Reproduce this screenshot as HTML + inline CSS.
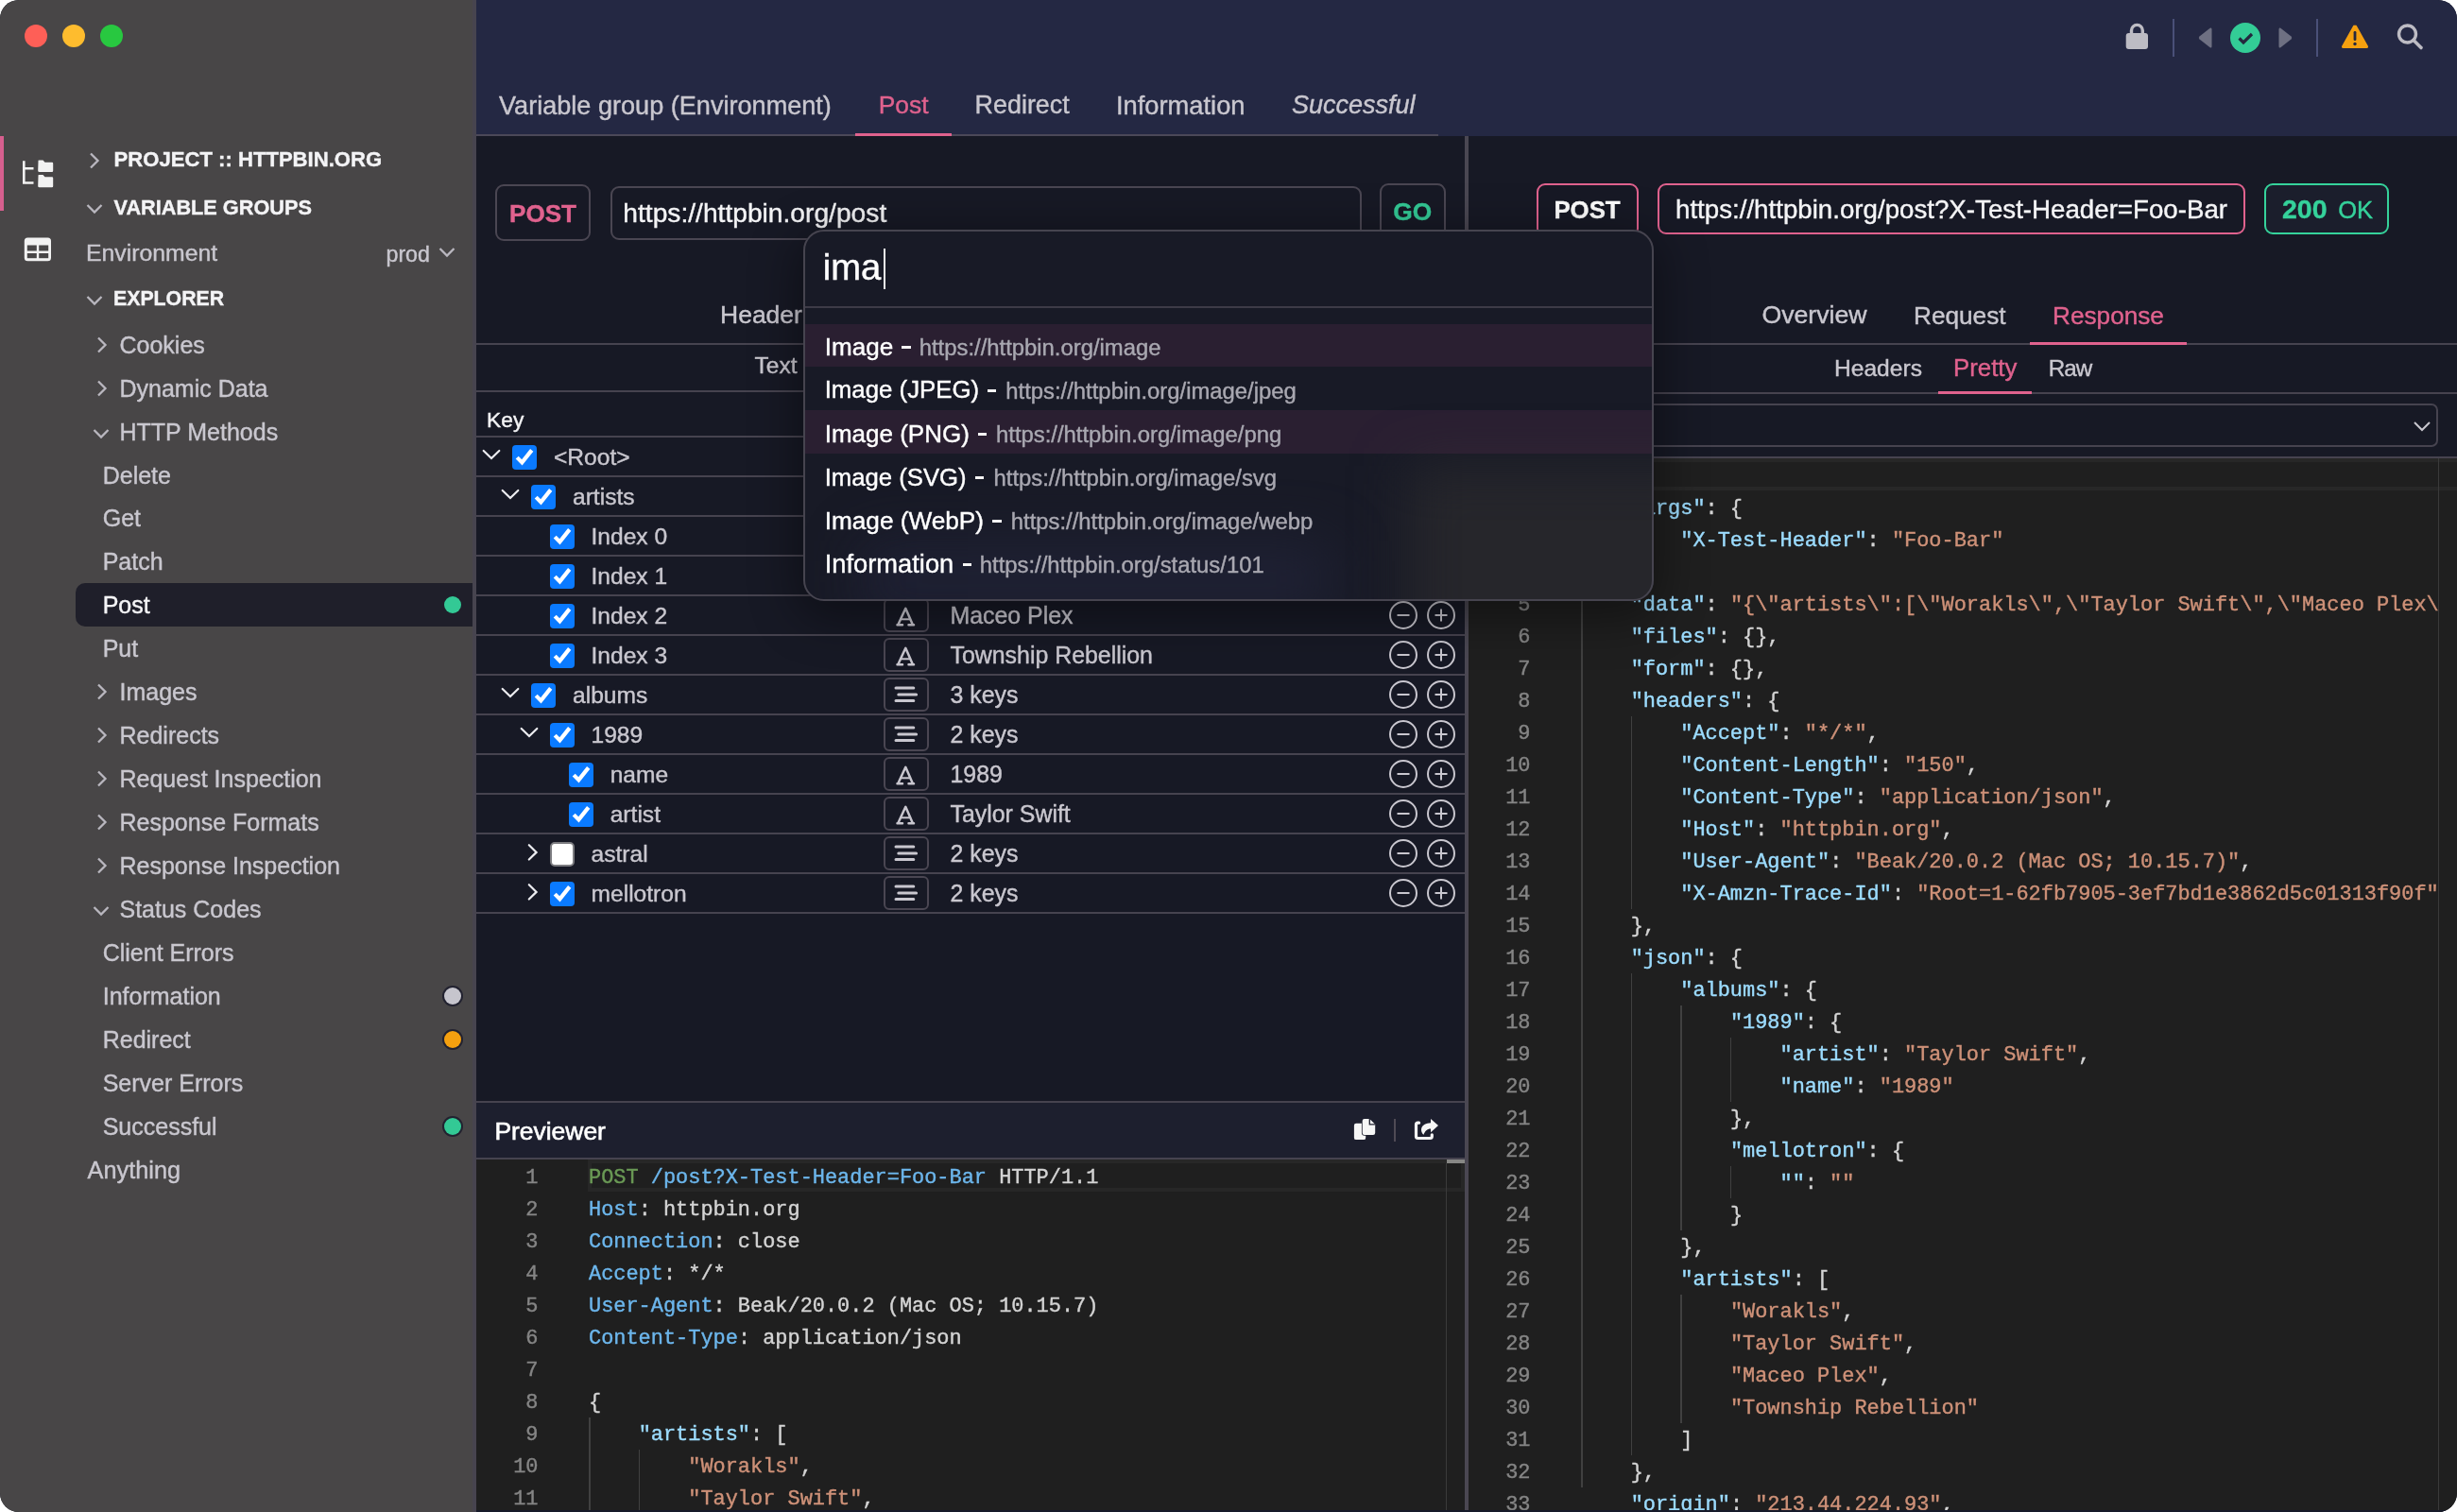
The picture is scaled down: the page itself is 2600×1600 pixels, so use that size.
<!DOCTYPE html>
<html><head><meta charset="utf-8"><style>
html,body{margin:0;padding:0;background:#fff;width:2600px;height:1600px;overflow:hidden}
#win{position:absolute;left:0;top:0;width:2600px;height:1600px;border-radius:20px;overflow:hidden;background:#171925;will-change:transform}
.t{position:absolute;white-space:pre;-webkit-font-smoothing:antialiased;-webkit-text-stroke-width:0.4px}
.r{position:absolute}
</style></head><body><div id="win">
<div class="r" style="left:0px;top:0px;width:500px;height:1600px;background:#484647;"></div>
<div class="r" style="left:500px;top:0px;width:4px;height:1600px;background:#47444f;"></div>
<div class="r" style="left:26px;top:26px;width:24px;height:24px;background:#fe5f57;border-radius:50%"></div>
<div class="r" style="left:66px;top:26px;width:24px;height:24px;background:#febc2e;border-radius:50%"></div>
<div class="r" style="left:106px;top:26px;width:24px;height:24px;background:#28c840;border-radius:50%"></div>
<div class="r" style="left:0px;top:144px;width:4px;height:79px;background:#d65f8e;"></div>
<svg class="r" style="left:20px;top:165px;" width="40" height="40" viewBox="0 0 40 40">
      <path d="M5.3 5.3 V28.5 H15.5" stroke="#f2f2f2" stroke-width="2.6" fill="none"/>
      <path d="M5.3 13.3 H15.5" stroke="#f2f2f2" stroke-width="2.6" fill="none"/>
      <path d="M20.5 5.5 Q20 4.5 21.5 4.5 H25.5 L27.5 6.8 H35 Q36.2 6.8 36.2 8 V15.5 Q36.2 17 35 17 H21.7 Q20.2 17 20.2 15.5 Z" fill="#f2f2f2"/>
      <path d="M20.5 21 Q20 20 21.5 20 H25.5 L27.5 22.3 H35 Q36.2 22.3 36.2 23.5 V32 Q36.2 33.2 35 33.2 H21.7 Q20.2 33.2 20.2 32 Z" fill="#f2f2f2"/>
    </svg>
<svg class="r" style="left:24px;top:249px;" width="32" height="30" viewBox="0 0 32 30">
      <rect x="1.8" y="2.4" width="28.2" height="24.8" rx="3.5" fill="#f2f2f2"/>
      <rect x="4.8" y="10.5" width="10" height="6" fill="#484647"/>
      <rect x="17.2" y="10.5" width="10" height="6" fill="#484647"/>
      <rect x="4.8" y="19" width="10" height="5.2" fill="#484647"/>
      <rect x="17.2" y="19" width="10" height="5.2" fill="#484647"/>
    </svg>
<svg class="r" style="left:93px;top:160px;" width="14" height="20" viewBox="0 0 14 20"><path d="M3 2.5 L10.5 10 L3 17.5" stroke="#b9b7bf" stroke-width="2.3" fill="none"/></svg>
<div class="t" style="left:120.60px;top:157.99px;font-size:22.1px;line-height:22.1px;color:#f4f4f6;font-weight:700;font-family:'Liberation Sans', sans-serif;font-style:normal;">PROJECT :: HTTPBIN.ORG</div>
<svg class="r" style="left:90px;top:214px;" width="20" height="14" viewBox="0 0 20 14"><path d="M2.5 3 L10 10.5 L17.5 3" stroke="#b9b7bf" stroke-width="2.3" fill="none"/></svg>
<div class="t" style="left:120.60px;top:208.53px;font-size:21.7px;line-height:21.7px;color:#f4f4f6;font-weight:700;font-family:'Liberation Sans', sans-serif;font-style:normal;">VARIABLE GROUPS</div>
<div class="t" style="left:91.00px;top:256.41px;font-size:24.8px;line-height:24.8px;color:#c9c7cf;font-weight:400;font-family:'Liberation Sans', sans-serif;font-style:normal;">Environment</div>
<div class="t" style="left:408.50px;top:257.76px;font-size:23.2px;line-height:23.2px;color:#c9c7cf;font-weight:400;font-family:'Liberation Sans', sans-serif;font-style:normal;">prod</div>
<svg class="r" style="left:463px;top:260px;" width="20" height="14" viewBox="0 0 20 14"><path d="M2.5 3 L10 10.5 L17.5 3" stroke="#b9b7bf" stroke-width="2.3" fill="none"/></svg>
<svg class="r" style="left:90px;top:311px;" width="20" height="14" viewBox="0 0 20 14"><path d="M2.5 3 L10 10.5 L17.5 3" stroke="#b9b7bf" stroke-width="2.3" fill="none"/></svg>
<div class="t" style="left:120.00px;top:306.37px;font-size:21.3px;line-height:21.3px;color:#f4f4f6;font-weight:700;font-family:'Liberation Sans', sans-serif;font-style:normal;">EXPLORER</div>
<svg class="r" style="left:101px;top:354.8px;" width="14" height="20" viewBox="0 0 14 20"><path d="M3 2.5 L10.5 10 L3 17.5" stroke="#b9b7bf" stroke-width="2.3" fill="none"/></svg>
<div class="t" style="left:126.50px;top:352.64px;font-size:25px;line-height:25px;color:#c9c7cf;font-weight:400;font-family:'Liberation Sans', sans-serif;font-style:normal;">Cookies</div>
<svg class="r" style="left:101px;top:400.76px;" width="14" height="20" viewBox="0 0 14 20"><path d="M3 2.5 L10.5 10 L3 17.5" stroke="#b9b7bf" stroke-width="2.3" fill="none"/></svg>
<div class="t" style="left:126.50px;top:398.60px;font-size:25px;line-height:25px;color:#c9c7cf;font-weight:400;font-family:'Liberation Sans', sans-serif;font-style:normal;">Dynamic Data</div>
<svg class="r" style="left:97px;top:451.72px;" width="20" height="14" viewBox="0 0 20 14"><path d="M2.5 3 L10 10.5 L17.5 3" stroke="#b9b7bf" stroke-width="2.3" fill="none"/></svg>
<div class="t" style="left:126.50px;top:444.56px;font-size:25px;line-height:25px;color:#c9c7cf;font-weight:400;font-family:'Liberation Sans', sans-serif;font-style:normal;">HTTP Methods</div>
<div class="t" style="left:108.70px;top:490.52px;font-size:25px;line-height:25px;color:#c9c7cf;font-weight:400;font-family:'Liberation Sans', sans-serif;font-style:normal;">Delete</div>
<div class="t" style="left:108.70px;top:536.48px;font-size:25px;line-height:25px;color:#c9c7cf;font-weight:400;font-family:'Liberation Sans', sans-serif;font-style:normal;">Get</div>
<div class="t" style="left:108.70px;top:582.44px;font-size:25px;line-height:25px;color:#c9c7cf;font-weight:400;font-family:'Liberation Sans', sans-serif;font-style:normal;">Patch</div>
<div class="r" style="left:80px;top:617px;width:420px;height:46px;background:#1f1f2a;border-radius:10px 0 0 10px"></div>
<div class="t" style="left:108.70px;top:628.40px;font-size:25px;line-height:25px;color:#f4f4f6;font-weight:400;font-family:'Liberation Sans', sans-serif;font-style:normal;">Post</div>
<div class="t" style="left:108.70px;top:674.36px;font-size:25px;line-height:25px;color:#c9c7cf;font-weight:400;font-family:'Liberation Sans', sans-serif;font-style:normal;">Put</div>
<svg class="r" style="left:101px;top:722.48px;" width="14" height="20" viewBox="0 0 14 20"><path d="M3 2.5 L10.5 10 L3 17.5" stroke="#b9b7bf" stroke-width="2.3" fill="none"/></svg>
<div class="t" style="left:126.50px;top:720.32px;font-size:25px;line-height:25px;color:#c9c7cf;font-weight:400;font-family:'Liberation Sans', sans-serif;font-style:normal;">Images</div>
<svg class="r" style="left:101px;top:768.44px;" width="14" height="20" viewBox="0 0 14 20"><path d="M3 2.5 L10.5 10 L3 17.5" stroke="#b9b7bf" stroke-width="2.3" fill="none"/></svg>
<div class="t" style="left:126.50px;top:766.28px;font-size:25px;line-height:25px;color:#c9c7cf;font-weight:400;font-family:'Liberation Sans', sans-serif;font-style:normal;">Redirects</div>
<svg class="r" style="left:101px;top:814.4000000000001px;" width="14" height="20" viewBox="0 0 14 20"><path d="M3 2.5 L10.5 10 L3 17.5" stroke="#b9b7bf" stroke-width="2.3" fill="none"/></svg>
<div class="t" style="left:126.50px;top:812.24px;font-size:25px;line-height:25px;color:#c9c7cf;font-weight:400;font-family:'Liberation Sans', sans-serif;font-style:normal;">Request Inspection</div>
<svg class="r" style="left:101px;top:860.36px;" width="14" height="20" viewBox="0 0 14 20"><path d="M3 2.5 L10.5 10 L3 17.5" stroke="#b9b7bf" stroke-width="2.3" fill="none"/></svg>
<div class="t" style="left:126.50px;top:858.20px;font-size:25px;line-height:25px;color:#c9c7cf;font-weight:400;font-family:'Liberation Sans', sans-serif;font-style:normal;">Response Formats</div>
<svg class="r" style="left:101px;top:906.3199999999999px;" width="14" height="20" viewBox="0 0 14 20"><path d="M3 2.5 L10.5 10 L3 17.5" stroke="#b9b7bf" stroke-width="2.3" fill="none"/></svg>
<div class="t" style="left:126.50px;top:904.16px;font-size:25px;line-height:25px;color:#c9c7cf;font-weight:400;font-family:'Liberation Sans', sans-serif;font-style:normal;">Response Inspection</div>
<svg class="r" style="left:97px;top:957.28px;" width="20" height="14" viewBox="0 0 20 14"><path d="M2.5 3 L10 10.5 L17.5 3" stroke="#b9b7bf" stroke-width="2.3" fill="none"/></svg>
<div class="t" style="left:126.50px;top:950.12px;font-size:25px;line-height:25px;color:#c9c7cf;font-weight:400;font-family:'Liberation Sans', sans-serif;font-style:normal;">Status Codes</div>
<div class="t" style="left:108.70px;top:996.08px;font-size:25px;line-height:25px;color:#c9c7cf;font-weight:400;font-family:'Liberation Sans', sans-serif;font-style:normal;">Client Errors</div>
<div class="t" style="left:108.70px;top:1042.04px;font-size:25px;line-height:25px;color:#c9c7cf;font-weight:400;font-family:'Liberation Sans', sans-serif;font-style:normal;">Information</div>
<div class="t" style="left:108.70px;top:1088.00px;font-size:25px;line-height:25px;color:#c9c7cf;font-weight:400;font-family:'Liberation Sans', sans-serif;font-style:normal;">Redirect</div>
<div class="t" style="left:108.70px;top:1133.96px;font-size:25px;line-height:25px;color:#c9c7cf;font-weight:400;font-family:'Liberation Sans', sans-serif;font-style:normal;">Server Errors</div>
<div class="t" style="left:108.70px;top:1179.92px;font-size:25px;line-height:25px;color:#c9c7cf;font-weight:400;font-family:'Liberation Sans', sans-serif;font-style:normal;">Successful</div>
<div class="t" style="left:92.60px;top:1225.62px;font-size:25.3px;line-height:25.3px;color:#c9c7cf;font-weight:400;font-family:'Liberation Sans', sans-serif;font-style:normal;">Anything</div>
<div class="r" style="left:470px;top:631.3599999999999px;width:18px;height:18px;background:#33c995;border-radius:50%;"></div>
<div class="r" style="left:470px;top:1045.2px;width:18px;height:18px;background:#c6c5cd;border-radius:50%;box-shadow:0 0 0 2px #222230;"></div>
<div class="r" style="left:470px;top:1091.16px;width:18px;height:18px;background:#f5a00f;border-radius:50%;box-shadow:0 0 0 2px #222230;"></div>
<div class="r" style="left:470px;top:1183.08px;width:18px;height:18px;background:#33c995;border-radius:50%;box-shadow:0 0 0 2px #222230;"></div>
<div class="r" style="left:504px;top:0px;width:2096px;height:144px;background:#242843;"></div>
<div class="r" style="left:504px;top:142px;width:1018px;height:2px;background:#4b4858;"></div>
<div class="r" style="left:905px;top:141px;width:102px;height:3px;background:#e0628e;"></div>
<div class="t" style="left:528.00px;top:97.76px;font-size:27.1px;line-height:27.1px;color:#c9c7cf;font-weight:400;font-family:'Liberation Sans', sans-serif;font-style:normal;">Variable group (Environment)</div>
<div class="t" style="left:929.70px;top:98.35px;font-size:26.4px;line-height:26.4px;color:#e0628e;font-weight:400;font-family:'Liberation Sans', sans-serif;font-style:normal;">Post</div>
<div class="t" style="left:1031.60px;top:97.93px;font-size:26.9px;line-height:26.9px;color:#c9c7cf;font-weight:400;font-family:'Liberation Sans', sans-serif;font-style:normal;">Redirect</div>
<div class="t" style="left:1181.00px;top:97.59px;font-size:27.3px;line-height:27.3px;color:#c9c7cf;font-weight:400;font-family:'Liberation Sans', sans-serif;font-style:normal;">Information</div>
<div class="t" style="left:1367.00px;top:97.84px;font-size:27.0px;line-height:27.0px;color:#c9c7cf;font-weight:400;font-family:'Liberation Sans', sans-serif;font-style:italic;">Successful</div>
<svg class="r" style="left:2244px;top:20px;" width="34" height="36" viewBox="0 0 34 36">
      <path d="M11.5 17 V12.3 a5.9 5.9 0 0 1 11.8 0 V17" stroke="#bdbcc4" stroke-width="3.4" fill="none"/>
      <rect x="5.7" y="15" width="23.3" height="17" rx="3" fill="#bdbcc4"/>
    </svg>
<div class="r" style="left:2299px;top:20px;width:2px;height:40px;background:#4a5078;"></div>
<svg class="r" style="left:2322px;top:26px;" width="22" height="28" viewBox="0 0 22 28"><path d="M17 3.5 Q18.5 3 18.5 5 V23 Q18.5 25 17 24.5 L5.5 15.5 Q4 14 5.5 12.5 Z" fill="#6e7082"/></svg>
<div class="r" style="left:2360px;top:24px;width:32px;height:32px;background:#33cc96;border-radius:50%"></div>
<svg class="r" style="left:2360px;top:24px;" width="32" height="32" viewBox="0 0 32 32"><path d="M9.5 16.5 L14 21 L23 12" stroke="#24283e" stroke-width="3.2" fill="none"/></svg>
<svg class="r" style="left:2408px;top:26px;" width="22" height="28" viewBox="0 0 22 28"><path d="M5 3.5 Q3.5 3 3.5 5 V23 Q3.5 25 5 24.5 L16.5 15.5 Q18 14 16.5 12.5 Z" fill="#6e7082"/></svg>
<div class="r" style="left:2451px;top:20px;width:2px;height:40px;background:#4a5078;"></div>
<svg class="r" style="left:2476px;top:24px;" width="32" height="30" viewBox="0 0 32 30">
      <path d="M16 3 Q17 2 18 3.5 L30 25 Q30.5 27 28.5 27 H3.5 Q1.5 27 2 25 L14 3.5 Q15 2 16 3 Z" fill="#f5a00f" transform="translate(0,0)"/>
      <rect x="14.6" y="9" width="2.8" height="10" rx="1.2" fill="#24283e"/>
      <circle cx="16" cy="22.5" r="1.7" fill="#24283e"/>
    </svg>
<svg class="r" style="left:2532px;top:22px;" width="36" height="34" viewBox="0 0 36 34">
      <circle cx="15.5" cy="14" r="9" stroke="#bdbcc4" stroke-width="3.4" fill="none"/>
      <path d="M22 20.5 L30 28.5" stroke="#bdbcc4" stroke-width="3.6" stroke-linecap="round"/>
    </svg>
<div class="r" style="left:524px;top:195px;width:100.5px;height:59.5px;background:transparent;box-sizing:border-box;border:2px solid #4a4652;border-radius:9px"></div>
<div class="t" style="left:539.00px;top:213.11px;font-size:26.1px;line-height:26.1px;color:#e0628e;font-weight:700;font-family:'Liberation Sans', sans-serif;font-style:normal;">POST</div>
<div class="r" style="left:645.5px;top:196.5px;width:795px;height:57px;background:transparent;box-sizing:border-box;border:2px solid #4a4652;border-radius:9px"></div>
<div class="t" style="left:659.30px;top:210.73px;font-size:28.2px;line-height:28.2px;color:#f4f4f6;font-weight:400;font-family:'Liberation Sans', sans-serif;font-style:normal;">https://httpbin.org/post</div>
<div class="r" style="left:1460px;top:194px;width:70px;height:60px;background:transparent;box-sizing:border-box;border:2px solid #4a4652;border-radius:9px"></div>
<div class="t" style="left:1474.30px;top:211.24px;font-size:26.3px;line-height:26.3px;color:#33c995;font-weight:700;font-family:'Liberation Sans', sans-serif;font-style:normal;">GO</div>
<div class="r" style="left:1550px;top:144px;width:4px;height:1456px;background:#4a4752;"></div>
<div class="t" style="left:762.00px;top:319.57px;font-size:26.5px;line-height:26.5px;color:#c9c7cf;font-weight:400;font-family:'Liberation Sans', sans-serif;font-style:normal;">Header</div>
<div class="r" style="left:504px;top:363px;width:1046px;height:2px;background:#46434f;"></div>
<div class="t" style="left:798.50px;top:374.96px;font-size:24.5px;line-height:24.5px;color:#c9c7cf;font-weight:400;font-family:'Liberation Sans', sans-serif;font-style:normal;">Text</div>
<div class="r" style="left:504px;top:413px;width:1046px;height:2px;background:#46434f;"></div>
<div class="t" style="left:515.00px;top:432.70px;font-size:22.8px;line-height:22.8px;color:#f4f4f6;font-weight:400;font-family:'Liberation Sans', sans-serif;font-style:normal;">Key</div>
<div class="r" style="left:504px;top:461px;width:1046px;height:2px;background:#46434f;"></div>
<div class="r" style="left:504px;top:503px;width:1046px;height:2px;background:#46434f;"></div>
<div class="r" style="left:504px;top:545px;width:1046px;height:2px;background:#46434f;"></div>
<div class="r" style="left:504px;top:587px;width:1046px;height:2px;background:#46434f;"></div>
<div class="r" style="left:504px;top:629px;width:1046px;height:2px;background:#46434f;"></div>
<div class="r" style="left:504px;top:671px;width:1046px;height:2px;background:#46434f;"></div>
<div class="r" style="left:504px;top:713px;width:1046px;height:2px;background:#46434f;"></div>
<div class="r" style="left:504px;top:755px;width:1046px;height:2px;background:#46434f;"></div>
<div class="r" style="left:504px;top:797px;width:1046px;height:2px;background:#46434f;"></div>
<div class="r" style="left:504px;top:839px;width:1046px;height:2px;background:#46434f;"></div>
<div class="r" style="left:504px;top:881px;width:1046px;height:2px;background:#46434f;"></div>
<div class="r" style="left:504px;top:923px;width:1046px;height:2px;background:#46434f;"></div>
<div class="r" style="left:504px;top:965px;width:1046px;height:2px;background:#46434f;"></div>
<svg class="r" style="left:510px;top:473px;" width="20" height="17" viewBox="0 0 20 17"><path d="M1.7 4 L10 12 L18.3 4" stroke="#ececf0" stroke-width="2.2" fill="none" stroke-linecap="round"/></svg>
<div class="r" style="left:542px;top:471px;width:26px;height:26px;background:#0a7aff;border-radius:4px"></div>
<svg class="r" style="left:542px;top:471px;" width="26" height="26" viewBox="0 0 26 26"><path d="M5.2 13.1 L10.4 18.4 L20.7 5.4" stroke="#fff" stroke-width="4.2" fill="none" stroke-linejoin="miter"/></svg>
<div class="t" style="left:586.00px;top:471.68px;font-size:24.6px;line-height:24.6px;color:#c9c7cf;font-weight:400;font-family:'Liberation Sans', sans-serif;font-style:normal;">&lt;Root&gt;</div>
<svg class="r" style="left:530px;top:515px;" width="20" height="17" viewBox="0 0 20 17"><path d="M1.7 4 L10 12 L18.3 4" stroke="#ececf0" stroke-width="2.2" fill="none" stroke-linecap="round"/></svg>
<div class="r" style="left:562px;top:513px;width:26px;height:26px;background:#0a7aff;border-radius:4px"></div>
<svg class="r" style="left:562px;top:513px;" width="26" height="26" viewBox="0 0 26 26"><path d="M5.2 13.1 L10.4 18.4 L20.7 5.4" stroke="#fff" stroke-width="4.2" fill="none" stroke-linejoin="miter"/></svg>
<div class="t" style="left:606.00px;top:513.68px;font-size:24.6px;line-height:24.6px;color:#c9c7cf;font-weight:400;font-family:'Liberation Sans', sans-serif;font-style:normal;">artists</div>
<div class="r" style="left:582px;top:555px;width:26px;height:26px;background:#0a7aff;border-radius:4px"></div>
<svg class="r" style="left:582px;top:555px;" width="26" height="26" viewBox="0 0 26 26"><path d="M5.2 13.1 L10.4 18.4 L20.7 5.4" stroke="#fff" stroke-width="4.2" fill="none" stroke-linejoin="miter"/></svg>
<div class="t" style="left:625.50px;top:555.68px;font-size:24.6px;line-height:24.6px;color:#c9c7cf;font-weight:400;font-family:'Liberation Sans', sans-serif;font-style:normal;">Index 0</div>
<div class="r" style="left:935.2px;top:549px;width:47.7px;height:36px;background:transparent;box-sizing:border-box;border:2px solid #4a4652;border-radius:6px"></div>
<svg class="r" style="left:935.2px;top:549px;" width="48" height="36" viewBox="0 0 48 36"><path d="M15.6 27.6 L23.3 10.8 L30.6 27.6" stroke="#c9c7cf" stroke-width="2.5" fill="none" stroke-linejoin="round"/><path d="M18.8 22.3 H27.8" stroke="#c9c7cf" stroke-width="2"/><path d="M14.5 28.2 H20 M26.5 28.2 H32" stroke="#c9c7cf" stroke-width="2.5" stroke-linecap="round"/></svg>
<div class="t" style="left:1005.50px;top:555.42px;font-size:24.9px;line-height:24.9px;color:#c9c7cf;font-weight:400;font-family:'Liberation Sans', sans-serif;font-style:normal;">Worakls</div>
<svg class="r" style="left:1468.6px;top:551px;" width="32" height="32" viewBox="0 0 32 32"><circle cx="16" cy="16" r="14" stroke="#c9c7cf" stroke-width="2" fill="none"/><path d="M9.5 16 H22.5" stroke="#c9c7cf" stroke-width="2"/></svg>
<svg class="r" style="left:1508.7px;top:551px;" width="32" height="32" viewBox="0 0 32 32"><circle cx="16" cy="16" r="14" stroke="#c9c7cf" stroke-width="2" fill="none"/><path d="M9.5 16 H22.5" stroke="#c9c7cf" stroke-width="2"/><path d="M16 9.5 V22.5" stroke="#c9c7cf" stroke-width="2"/></svg>
<div class="r" style="left:582px;top:597px;width:26px;height:26px;background:#0a7aff;border-radius:4px"></div>
<svg class="r" style="left:582px;top:597px;" width="26" height="26" viewBox="0 0 26 26"><path d="M5.2 13.1 L10.4 18.4 L20.7 5.4" stroke="#fff" stroke-width="4.2" fill="none" stroke-linejoin="miter"/></svg>
<div class="t" style="left:625.50px;top:597.68px;font-size:24.6px;line-height:24.6px;color:#c9c7cf;font-weight:400;font-family:'Liberation Sans', sans-serif;font-style:normal;">Index 1</div>
<div class="r" style="left:935.2px;top:591px;width:47.7px;height:36px;background:transparent;box-sizing:border-box;border:2px solid #4a4652;border-radius:6px"></div>
<svg class="r" style="left:935.2px;top:591px;" width="48" height="36" viewBox="0 0 48 36"><path d="M15.6 27.6 L23.3 10.8 L30.6 27.6" stroke="#c9c7cf" stroke-width="2.5" fill="none" stroke-linejoin="round"/><path d="M18.8 22.3 H27.8" stroke="#c9c7cf" stroke-width="2"/><path d="M14.5 28.2 H20 M26.5 28.2 H32" stroke="#c9c7cf" stroke-width="2.5" stroke-linecap="round"/></svg>
<div class="t" style="left:1005.50px;top:597.42px;font-size:24.9px;line-height:24.9px;color:#c9c7cf;font-weight:400;font-family:'Liberation Sans', sans-serif;font-style:normal;">Taylor Swift</div>
<svg class="r" style="left:1468.6px;top:593px;" width="32" height="32" viewBox="0 0 32 32"><circle cx="16" cy="16" r="14" stroke="#c9c7cf" stroke-width="2" fill="none"/><path d="M9.5 16 H22.5" stroke="#c9c7cf" stroke-width="2"/></svg>
<svg class="r" style="left:1508.7px;top:593px;" width="32" height="32" viewBox="0 0 32 32"><circle cx="16" cy="16" r="14" stroke="#c9c7cf" stroke-width="2" fill="none"/><path d="M9.5 16 H22.5" stroke="#c9c7cf" stroke-width="2"/><path d="M16 9.5 V22.5" stroke="#c9c7cf" stroke-width="2"/></svg>
<div class="r" style="left:582px;top:639px;width:26px;height:26px;background:#0a7aff;border-radius:4px"></div>
<svg class="r" style="left:582px;top:639px;" width="26" height="26" viewBox="0 0 26 26"><path d="M5.2 13.1 L10.4 18.4 L20.7 5.4" stroke="#fff" stroke-width="4.2" fill="none" stroke-linejoin="miter"/></svg>
<div class="t" style="left:625.50px;top:639.68px;font-size:24.6px;line-height:24.6px;color:#c9c7cf;font-weight:400;font-family:'Liberation Sans', sans-serif;font-style:normal;">Index 2</div>
<div class="r" style="left:935.2px;top:633px;width:47.7px;height:36px;background:transparent;box-sizing:border-box;border:2px solid #4a4652;border-radius:6px"></div>
<svg class="r" style="left:935.2px;top:633px;" width="48" height="36" viewBox="0 0 48 36"><path d="M15.6 27.6 L23.3 10.8 L30.6 27.6" stroke="#c9c7cf" stroke-width="2.5" fill="none" stroke-linejoin="round"/><path d="M18.8 22.3 H27.8" stroke="#c9c7cf" stroke-width="2"/><path d="M14.5 28.2 H20 M26.5 28.2 H32" stroke="#c9c7cf" stroke-width="2.5" stroke-linecap="round"/></svg>
<div class="t" style="left:1005.50px;top:639.42px;font-size:24.9px;line-height:24.9px;color:#c9c7cf;font-weight:400;font-family:'Liberation Sans', sans-serif;font-style:normal;">Maceo Plex</div>
<svg class="r" style="left:1468.6px;top:635px;" width="32" height="32" viewBox="0 0 32 32"><circle cx="16" cy="16" r="14" stroke="#c9c7cf" stroke-width="2" fill="none"/><path d="M9.5 16 H22.5" stroke="#c9c7cf" stroke-width="2"/></svg>
<svg class="r" style="left:1508.7px;top:635px;" width="32" height="32" viewBox="0 0 32 32"><circle cx="16" cy="16" r="14" stroke="#c9c7cf" stroke-width="2" fill="none"/><path d="M9.5 16 H22.5" stroke="#c9c7cf" stroke-width="2"/><path d="M16 9.5 V22.5" stroke="#c9c7cf" stroke-width="2"/></svg>
<div class="r" style="left:582px;top:681px;width:26px;height:26px;background:#0a7aff;border-radius:4px"></div>
<svg class="r" style="left:582px;top:681px;" width="26" height="26" viewBox="0 0 26 26"><path d="M5.2 13.1 L10.4 18.4 L20.7 5.4" stroke="#fff" stroke-width="4.2" fill="none" stroke-linejoin="miter"/></svg>
<div class="t" style="left:625.50px;top:681.68px;font-size:24.6px;line-height:24.6px;color:#c9c7cf;font-weight:400;font-family:'Liberation Sans', sans-serif;font-style:normal;">Index 3</div>
<div class="r" style="left:935.2px;top:675px;width:47.7px;height:36px;background:transparent;box-sizing:border-box;border:2px solid #4a4652;border-radius:6px"></div>
<svg class="r" style="left:935.2px;top:675px;" width="48" height="36" viewBox="0 0 48 36"><path d="M15.6 27.6 L23.3 10.8 L30.6 27.6" stroke="#c9c7cf" stroke-width="2.5" fill="none" stroke-linejoin="round"/><path d="M18.8 22.3 H27.8" stroke="#c9c7cf" stroke-width="2"/><path d="M14.5 28.2 H20 M26.5 28.2 H32" stroke="#c9c7cf" stroke-width="2.5" stroke-linecap="round"/></svg>
<div class="t" style="left:1005.50px;top:681.42px;font-size:24.9px;line-height:24.9px;color:#c9c7cf;font-weight:400;font-family:'Liberation Sans', sans-serif;font-style:normal;">Township Rebellion</div>
<svg class="r" style="left:1468.6px;top:677px;" width="32" height="32" viewBox="0 0 32 32"><circle cx="16" cy="16" r="14" stroke="#c9c7cf" stroke-width="2" fill="none"/><path d="M9.5 16 H22.5" stroke="#c9c7cf" stroke-width="2"/></svg>
<svg class="r" style="left:1508.7px;top:677px;" width="32" height="32" viewBox="0 0 32 32"><circle cx="16" cy="16" r="14" stroke="#c9c7cf" stroke-width="2" fill="none"/><path d="M9.5 16 H22.5" stroke="#c9c7cf" stroke-width="2"/><path d="M16 9.5 V22.5" stroke="#c9c7cf" stroke-width="2"/></svg>
<svg class="r" style="left:530px;top:725px;" width="20" height="17" viewBox="0 0 20 17"><path d="M1.7 4 L10 12 L18.3 4" stroke="#ececf0" stroke-width="2.2" fill="none" stroke-linecap="round"/></svg>
<div class="r" style="left:562px;top:723px;width:26px;height:26px;background:#0a7aff;border-radius:4px"></div>
<svg class="r" style="left:562px;top:723px;" width="26" height="26" viewBox="0 0 26 26"><path d="M5.2 13.1 L10.4 18.4 L20.7 5.4" stroke="#fff" stroke-width="4.2" fill="none" stroke-linejoin="miter"/></svg>
<div class="t" style="left:606.00px;top:723.68px;font-size:24.6px;line-height:24.6px;color:#c9c7cf;font-weight:400;font-family:'Liberation Sans', sans-serif;font-style:normal;">albums</div>
<div class="r" style="left:935.2px;top:717px;width:47.7px;height:36px;background:transparent;box-sizing:border-box;border:2px solid #4a4652;border-radius:6px"></div>
<svg class="r" style="left:935.2px;top:717px;" width="48" height="36" viewBox="0 0 48 36"><path d="M13 11 H31.8 M15.8 18 H34.6 M13 24.4 H31.8" stroke="#c9c7cf" stroke-width="3" stroke-linecap="round"/></svg>
<div class="t" style="left:1005.50px;top:723.42px;font-size:24.9px;line-height:24.9px;color:#c9c7cf;font-weight:400;font-family:'Liberation Sans', sans-serif;font-style:normal;">3 keys</div>
<svg class="r" style="left:1468.6px;top:719px;" width="32" height="32" viewBox="0 0 32 32"><circle cx="16" cy="16" r="14" stroke="#c9c7cf" stroke-width="2" fill="none"/><path d="M9.5 16 H22.5" stroke="#c9c7cf" stroke-width="2"/></svg>
<svg class="r" style="left:1508.7px;top:719px;" width="32" height="32" viewBox="0 0 32 32"><circle cx="16" cy="16" r="14" stroke="#c9c7cf" stroke-width="2" fill="none"/><path d="M9.5 16 H22.5" stroke="#c9c7cf" stroke-width="2"/><path d="M16 9.5 V22.5" stroke="#c9c7cf" stroke-width="2"/></svg>
<svg class="r" style="left:550px;top:767px;" width="20" height="17" viewBox="0 0 20 17"><path d="M1.7 4 L10 12 L18.3 4" stroke="#ececf0" stroke-width="2.2" fill="none" stroke-linecap="round"/></svg>
<div class="r" style="left:582px;top:765px;width:26px;height:26px;background:#0a7aff;border-radius:4px"></div>
<svg class="r" style="left:582px;top:765px;" width="26" height="26" viewBox="0 0 26 26"><path d="M5.2 13.1 L10.4 18.4 L20.7 5.4" stroke="#fff" stroke-width="4.2" fill="none" stroke-linejoin="miter"/></svg>
<div class="t" style="left:625.50px;top:765.68px;font-size:24.6px;line-height:24.6px;color:#c9c7cf;font-weight:400;font-family:'Liberation Sans', sans-serif;font-style:normal;">1989</div>
<div class="r" style="left:935.2px;top:759px;width:47.7px;height:36px;background:transparent;box-sizing:border-box;border:2px solid #4a4652;border-radius:6px"></div>
<svg class="r" style="left:935.2px;top:759px;" width="48" height="36" viewBox="0 0 48 36"><path d="M13 11 H31.8 M15.8 18 H34.6 M13 24.4 H31.8" stroke="#c9c7cf" stroke-width="3" stroke-linecap="round"/></svg>
<div class="t" style="left:1005.50px;top:765.42px;font-size:24.9px;line-height:24.9px;color:#c9c7cf;font-weight:400;font-family:'Liberation Sans', sans-serif;font-style:normal;">2 keys</div>
<svg class="r" style="left:1468.6px;top:761px;" width="32" height="32" viewBox="0 0 32 32"><circle cx="16" cy="16" r="14" stroke="#c9c7cf" stroke-width="2" fill="none"/><path d="M9.5 16 H22.5" stroke="#c9c7cf" stroke-width="2"/></svg>
<svg class="r" style="left:1508.7px;top:761px;" width="32" height="32" viewBox="0 0 32 32"><circle cx="16" cy="16" r="14" stroke="#c9c7cf" stroke-width="2" fill="none"/><path d="M9.5 16 H22.5" stroke="#c9c7cf" stroke-width="2"/><path d="M16 9.5 V22.5" stroke="#c9c7cf" stroke-width="2"/></svg>
<div class="r" style="left:602px;top:807px;width:26px;height:26px;background:#0a7aff;border-radius:4px"></div>
<svg class="r" style="left:602px;top:807px;" width="26" height="26" viewBox="0 0 26 26"><path d="M5.2 13.1 L10.4 18.4 L20.7 5.4" stroke="#fff" stroke-width="4.2" fill="none" stroke-linejoin="miter"/></svg>
<div class="t" style="left:645.70px;top:807.68px;font-size:24.6px;line-height:24.6px;color:#c9c7cf;font-weight:400;font-family:'Liberation Sans', sans-serif;font-style:normal;">name</div>
<div class="r" style="left:935.2px;top:801px;width:47.7px;height:36px;background:transparent;box-sizing:border-box;border:2px solid #4a4652;border-radius:6px"></div>
<svg class="r" style="left:935.2px;top:801px;" width="48" height="36" viewBox="0 0 48 36"><path d="M15.6 27.6 L23.3 10.8 L30.6 27.6" stroke="#c9c7cf" stroke-width="2.5" fill="none" stroke-linejoin="round"/><path d="M18.8 22.3 H27.8" stroke="#c9c7cf" stroke-width="2"/><path d="M14.5 28.2 H20 M26.5 28.2 H32" stroke="#c9c7cf" stroke-width="2.5" stroke-linecap="round"/></svg>
<div class="t" style="left:1005.50px;top:807.42px;font-size:24.9px;line-height:24.9px;color:#c9c7cf;font-weight:400;font-family:'Liberation Sans', sans-serif;font-style:normal;">1989</div>
<svg class="r" style="left:1468.6px;top:803px;" width="32" height="32" viewBox="0 0 32 32"><circle cx="16" cy="16" r="14" stroke="#c9c7cf" stroke-width="2" fill="none"/><path d="M9.5 16 H22.5" stroke="#c9c7cf" stroke-width="2"/></svg>
<svg class="r" style="left:1508.7px;top:803px;" width="32" height="32" viewBox="0 0 32 32"><circle cx="16" cy="16" r="14" stroke="#c9c7cf" stroke-width="2" fill="none"/><path d="M9.5 16 H22.5" stroke="#c9c7cf" stroke-width="2"/><path d="M16 9.5 V22.5" stroke="#c9c7cf" stroke-width="2"/></svg>
<div class="r" style="left:602px;top:849px;width:26px;height:26px;background:#0a7aff;border-radius:4px"></div>
<svg class="r" style="left:602px;top:849px;" width="26" height="26" viewBox="0 0 26 26"><path d="M5.2 13.1 L10.4 18.4 L20.7 5.4" stroke="#fff" stroke-width="4.2" fill="none" stroke-linejoin="miter"/></svg>
<div class="t" style="left:645.70px;top:849.68px;font-size:24.6px;line-height:24.6px;color:#c9c7cf;font-weight:400;font-family:'Liberation Sans', sans-serif;font-style:normal;">artist</div>
<div class="r" style="left:935.2px;top:843px;width:47.7px;height:36px;background:transparent;box-sizing:border-box;border:2px solid #4a4652;border-radius:6px"></div>
<svg class="r" style="left:935.2px;top:843px;" width="48" height="36" viewBox="0 0 48 36"><path d="M15.6 27.6 L23.3 10.8 L30.6 27.6" stroke="#c9c7cf" stroke-width="2.5" fill="none" stroke-linejoin="round"/><path d="M18.8 22.3 H27.8" stroke="#c9c7cf" stroke-width="2"/><path d="M14.5 28.2 H20 M26.5 28.2 H32" stroke="#c9c7cf" stroke-width="2.5" stroke-linecap="round"/></svg>
<div class="t" style="left:1005.50px;top:849.42px;font-size:24.9px;line-height:24.9px;color:#c9c7cf;font-weight:400;font-family:'Liberation Sans', sans-serif;font-style:normal;">Taylor Swift</div>
<svg class="r" style="left:1468.6px;top:845px;" width="32" height="32" viewBox="0 0 32 32"><circle cx="16" cy="16" r="14" stroke="#c9c7cf" stroke-width="2" fill="none"/><path d="M9.5 16 H22.5" stroke="#c9c7cf" stroke-width="2"/></svg>
<svg class="r" style="left:1508.7px;top:845px;" width="32" height="32" viewBox="0 0 32 32"><circle cx="16" cy="16" r="14" stroke="#c9c7cf" stroke-width="2" fill="none"/><path d="M9.5 16 H22.5" stroke="#c9c7cf" stroke-width="2"/><path d="M16 9.5 V22.5" stroke="#c9c7cf" stroke-width="2"/></svg>
<svg class="r" style="left:555px;top:892px;" width="16" height="22" viewBox="0 0 16 22"><path d="M4.8 2.2 L12.6 9.9 L4.8 17.5" stroke="#ececf0" stroke-width="2.2" fill="none" stroke-linecap="round"/></svg>
<div class="r" style="left:582px;top:891.3px;width:26px;height:26px;background:#ffffff;box-sizing:border-box;border:2px solid #7c7c80;border-radius:5px"></div>
<div class="t" style="left:625.50px;top:891.68px;font-size:24.6px;line-height:24.6px;color:#c9c7cf;font-weight:400;font-family:'Liberation Sans', sans-serif;font-style:normal;">astral</div>
<div class="r" style="left:935.2px;top:885px;width:47.7px;height:36px;background:transparent;box-sizing:border-box;border:2px solid #4a4652;border-radius:6px"></div>
<svg class="r" style="left:935.2px;top:885px;" width="48" height="36" viewBox="0 0 48 36"><path d="M13 11 H31.8 M15.8 18 H34.6 M13 24.4 H31.8" stroke="#c9c7cf" stroke-width="3" stroke-linecap="round"/></svg>
<div class="t" style="left:1005.50px;top:891.42px;font-size:24.9px;line-height:24.9px;color:#c9c7cf;font-weight:400;font-family:'Liberation Sans', sans-serif;font-style:normal;">2 keys</div>
<svg class="r" style="left:1468.6px;top:887px;" width="32" height="32" viewBox="0 0 32 32"><circle cx="16" cy="16" r="14" stroke="#c9c7cf" stroke-width="2" fill="none"/><path d="M9.5 16 H22.5" stroke="#c9c7cf" stroke-width="2"/></svg>
<svg class="r" style="left:1508.7px;top:887px;" width="32" height="32" viewBox="0 0 32 32"><circle cx="16" cy="16" r="14" stroke="#c9c7cf" stroke-width="2" fill="none"/><path d="M9.5 16 H22.5" stroke="#c9c7cf" stroke-width="2"/><path d="M16 9.5 V22.5" stroke="#c9c7cf" stroke-width="2"/></svg>
<svg class="r" style="left:555px;top:934px;" width="16" height="22" viewBox="0 0 16 22"><path d="M4.8 2.2 L12.6 9.9 L4.8 17.5" stroke="#ececf0" stroke-width="2.2" fill="none" stroke-linecap="round"/></svg>
<div class="r" style="left:582px;top:933px;width:26px;height:26px;background:#0a7aff;border-radius:4px"></div>
<svg class="r" style="left:582px;top:933px;" width="26" height="26" viewBox="0 0 26 26"><path d="M5.2 13.1 L10.4 18.4 L20.7 5.4" stroke="#fff" stroke-width="4.2" fill="none" stroke-linejoin="miter"/></svg>
<div class="t" style="left:625.50px;top:933.68px;font-size:24.6px;line-height:24.6px;color:#c9c7cf;font-weight:400;font-family:'Liberation Sans', sans-serif;font-style:normal;">mellotron</div>
<div class="r" style="left:935.2px;top:927px;width:47.7px;height:36px;background:transparent;box-sizing:border-box;border:2px solid #4a4652;border-radius:6px"></div>
<svg class="r" style="left:935.2px;top:927px;" width="48" height="36" viewBox="0 0 48 36"><path d="M13 11 H31.8 M15.8 18 H34.6 M13 24.4 H31.8" stroke="#c9c7cf" stroke-width="3" stroke-linecap="round"/></svg>
<div class="t" style="left:1005.50px;top:933.42px;font-size:24.9px;line-height:24.9px;color:#c9c7cf;font-weight:400;font-family:'Liberation Sans', sans-serif;font-style:normal;">2 keys</div>
<svg class="r" style="left:1468.6px;top:929px;" width="32" height="32" viewBox="0 0 32 32"><circle cx="16" cy="16" r="14" stroke="#c9c7cf" stroke-width="2" fill="none"/><path d="M9.5 16 H22.5" stroke="#c9c7cf" stroke-width="2"/></svg>
<svg class="r" style="left:1508.7px;top:929px;" width="32" height="32" viewBox="0 0 32 32"><circle cx="16" cy="16" r="14" stroke="#c9c7cf" stroke-width="2" fill="none"/><path d="M9.5 16 H22.5" stroke="#c9c7cf" stroke-width="2"/><path d="M16 9.5 V22.5" stroke="#c9c7cf" stroke-width="2"/></svg>
<div class="r" style="left:504px;top:1165px;width:1046px;height:2px;background:#46434f;"></div>
<div class="r" style="left:504px;top:1167px;width:1046px;height:58px;background:#1d1f2e;"></div>
<div class="r" style="left:504px;top:1225px;width:1046px;height:2px;background:#46434f;"></div>
<div class="t" style="left:523.40px;top:1183.71px;font-size:26.45px;line-height:26.45px;color:#ffffff;font-weight:400;font-family:'Liberation Sans', sans-serif;font-style:normal;-webkit-text-stroke:0.6px #ffffff;">Previewer</div>
<svg class="r" style="left:1428px;top:1180px;" width="32" height="30" viewBox="0 0 32 30">
      <rect x="4.9" y="8.8" width="12.3" height="17.3" rx="2.2" fill="#f6f6f6"/>
      <path d="M15.9 3.9 H21.3 L27.2 9.8 V18.8 Q27.2 21 25 21 H15.9 Q13.7 21 13.7 18.8 V6.1 Q13.7 3.9 15.9 3.9 Z" fill="#f6f6f6" stroke="#1d1f2e" stroke-width="1.6" paint-order="stroke"/>
      <path d="M21.3 3.9 V9.8 H27.2" stroke="#1d1f2e" stroke-width="1.3" fill="none"/>
    </svg>
<div class="r" style="left:1475px;top:1184.2px;width:2px;height:23.4px;background:#4f4a55;"></div>
<svg class="r" style="left:1492px;top:1178px;" width="34" height="32" viewBox="0 0 34 32">
      <path d="M9.6 10.2 H8.5 Q6.5 10.2 6.5 12.2 V24.5 Q6.5 26.5 8.5 26.5 H21.3 Q23.3 26.5 23.3 24.5 V22.8" stroke="#f6f6f6" stroke-width="3.2" fill="none" stroke-linecap="round"/>
      <path d="M14.5 22.8 C10 18.5 11.5 10.5 22 10.2 V5.9 L30 13 L22 20.3 V16.6 C18 16.6 16 19 14.5 22.8 Z" fill="#f6f6f6"/>
    </svg>
<div class="r" style="left:1626px;top:194px;width:108px;height:57px;background:transparent;box-sizing:border-box;border:2.5px solid #e0628e;border-radius:9px"></div>
<div class="t" style="left:1644.40px;top:209.66px;font-size:25.8px;line-height:25.8px;color:#ffffff;font-weight:700;font-family:'Liberation Sans', sans-serif;font-style:normal;">POST</div>
<div class="r" style="left:1754px;top:194px;width:622px;height:54px;background:transparent;box-sizing:border-box;border:2.5px solid #e0628e;border-radius:9px"></div>
<div class="t" style="left:1773.00px;top:208.05px;font-size:27.7px;line-height:27.7px;color:#f4f4f6;font-weight:400;font-family:'Liberation Sans', sans-serif;font-style:normal;">https://httpbin.org/post?X-Test-Header=Foo-Bar</div>
<div class="r" style="left:2396px;top:194px;width:132px;height:54px;background:#1b1e2c;box-sizing:border-box;border:2.5px solid #35d29b;border-radius:9px"></div>
<div class="t" style="left:2415.00px;top:206.97px;font-size:28.5px;line-height:28.5px;color:#35d29b;font-weight:700;font-family:'Liberation Sans', sans-serif;font-style:normal;">200</div>
<div class="t" style="left:2474.20px;top:209.51px;font-size:25.5px;line-height:25.5px;color:#35d29b;font-weight:400;font-family:'Liberation Sans', sans-serif;font-style:normal;">OK</div>
<div class="t" style="left:1864.40px;top:320.20px;font-size:26.7px;line-height:26.7px;color:#c9c7cf;font-weight:400;font-family:'Liberation Sans', sans-serif;font-style:normal;">Overview</div>
<div class="t" style="left:2025.00px;top:320.62px;font-size:26.2px;line-height:26.2px;color:#c9c7cf;font-weight:400;font-family:'Liberation Sans', sans-serif;font-style:normal;">Request</div>
<div class="t" style="left:2172.00px;top:320.62px;font-size:26.2px;line-height:26.2px;color:#e0628e;font-weight:400;font-family:'Liberation Sans', sans-serif;font-style:normal;">Response</div>
<div class="r" style="left:1554px;top:363px;width:1046px;height:2px;background:#46434f;"></div>
<div class="r" style="left:2148px;top:362px;width:166px;height:3px;background:#e0628e;"></div>
<div class="t" style="left:1941.00px;top:377.98px;font-size:24.6px;line-height:24.6px;color:#c9c7cf;font-weight:400;font-family:'Liberation Sans', sans-serif;font-style:normal;">Headers</div>
<div class="t" style="left:2067.00px;top:376.96px;font-size:25.8px;line-height:25.8px;color:#e0628e;font-weight:400;font-family:'Liberation Sans', sans-serif;font-style:normal;">Pretty</div>
<div class="t" style="left:2167.70px;top:378.31px;font-size:24.2px;line-height:24.2px;color:#c9c7cf;font-weight:400;font-family:'Liberation Sans', sans-serif;font-style:normal;letter-spacing:-0.9px;">Raw</div>
<div class="r" style="left:1554px;top:415px;width:1046px;height:2px;background:#46434f;"></div>
<div class="r" style="left:2051px;top:413.5px;width:99px;height:3px;background:#e0628e;"></div>
<div class="r" style="left:1574px;top:427px;width:1006px;height:46px;background:transparent;box-sizing:border-box;border:2px solid #46434f;border-radius:7px"></div>
<svg class="r" style="left:2552px;top:443px;" width="22" height="16" viewBox="0 0 22 16"><path d="M3 4 L11 12 L19 4" stroke="#c9c7cf" stroke-width="2" fill="none"/></svg>
<div class="r" style="left:1554px;top:483px;width:1046px;height:2px;background:#46434f;"></div>
<div class="r" style="left:1554px;top:485px;width:1046px;height:1115px;background:#1f1f1f;"></div>
<div class="r" style="left:1554px;top:485px;width:1046px;height:34.3px;background:transparent;box-sizing:border-box;border:4.2px solid #272727;border-left:none;border-right:none"></div>
<div class="r" style="left:2580px;top:485px;width:1.2px;height:1115px;background:#3a3a3a;"></div>
<div class="r" style="left:1554px;top:485px;width:1026px;height:1115px;overflow:hidden">
<div class="r" style="left:-1554px;top:-485px;width:2600px;height:1600px">
<div class="t" style="right:980.50px;top:494.39px;font-size:21.93px;line-height:21.93px;color:#858585;font-weight:400;font-family:'Liberation Mono', monospace;font-style:normal;">1</div>
<div class="t" style="left:1673.00px;top:494.39px;font-size:21.93px;line-height:21.93px;color:#d4d4d4;font-weight:400;font-family:'Liberation Mono', monospace;font-style:normal;"><span style="color:#d4d4d4">{</span></div>
<div class="t" style="right:980.50px;top:528.39px;font-size:21.93px;line-height:21.93px;color:#858585;font-weight:400;font-family:'Liberation Mono', monospace;font-style:normal;">2</div>
<div class="t" style="left:1673.00px;top:528.39px;font-size:21.93px;line-height:21.93px;color:#d4d4d4;font-weight:400;font-family:'Liberation Mono', monospace;font-style:normal;"><span style="color:#d4d4d4">    </span><span style="color:#9cdcfe">&quot;args&quot;</span><span style="color:#d4d4d4">: {</span></div>
<div class="t" style="right:980.50px;top:562.39px;font-size:21.93px;line-height:21.93px;color:#858585;font-weight:400;font-family:'Liberation Mono', monospace;font-style:normal;">3</div>
<div class="t" style="left:1673.00px;top:562.39px;font-size:21.93px;line-height:21.93px;color:#d4d4d4;font-weight:400;font-family:'Liberation Mono', monospace;font-style:normal;"><span style="color:#d4d4d4">        </span><span style="color:#9cdcfe">&quot;X-Test-Header&quot;</span><span style="color:#d4d4d4">: </span><span style="color:#ce9178">&quot;Foo-Bar&quot;</span></div>
<div class="t" style="right:980.50px;top:596.39px;font-size:21.93px;line-height:21.93px;color:#858585;font-weight:400;font-family:'Liberation Mono', monospace;font-style:normal;">4</div>
<div class="t" style="left:1673.00px;top:596.39px;font-size:21.93px;line-height:21.93px;color:#d4d4d4;font-weight:400;font-family:'Liberation Mono', monospace;font-style:normal;"><span style="color:#d4d4d4">    </span><span style="color:#d4d4d4">},</span></div>
<div class="t" style="right:980.50px;top:630.39px;font-size:21.93px;line-height:21.93px;color:#858585;font-weight:400;font-family:'Liberation Mono', monospace;font-style:normal;">5</div>
<div class="t" style="left:1673.00px;top:630.39px;font-size:21.93px;line-height:21.93px;color:#d4d4d4;font-weight:400;font-family:'Liberation Mono', monospace;font-style:normal;"><span style="color:#d4d4d4">    </span><span style="color:#9cdcfe">&quot;data&quot;</span><span style="color:#d4d4d4">: </span><span style="color:#ce9178">&quot;{\&quot;artists\&quot;:[\&quot;Worakls\&quot;,\&quot;Taylor Swift\&quot;,\&quot;Maceo Plex\&quot;,\&quot;Township Rebellion\&quot;]}&quot;</span></div>
<div class="t" style="right:980.50px;top:664.39px;font-size:21.93px;line-height:21.93px;color:#858585;font-weight:400;font-family:'Liberation Mono', monospace;font-style:normal;">6</div>
<div class="t" style="left:1673.00px;top:664.39px;font-size:21.93px;line-height:21.93px;color:#d4d4d4;font-weight:400;font-family:'Liberation Mono', monospace;font-style:normal;"><span style="color:#d4d4d4">    </span><span style="color:#9cdcfe">&quot;files&quot;</span><span style="color:#d4d4d4">: {},</span></div>
<div class="t" style="right:980.50px;top:698.39px;font-size:21.93px;line-height:21.93px;color:#858585;font-weight:400;font-family:'Liberation Mono', monospace;font-style:normal;">7</div>
<div class="t" style="left:1673.00px;top:698.39px;font-size:21.93px;line-height:21.93px;color:#d4d4d4;font-weight:400;font-family:'Liberation Mono', monospace;font-style:normal;"><span style="color:#d4d4d4">    </span><span style="color:#9cdcfe">&quot;form&quot;</span><span style="color:#d4d4d4">: {},</span></div>
<div class="t" style="right:980.50px;top:732.39px;font-size:21.93px;line-height:21.93px;color:#858585;font-weight:400;font-family:'Liberation Mono', monospace;font-style:normal;">8</div>
<div class="t" style="left:1673.00px;top:732.39px;font-size:21.93px;line-height:21.93px;color:#d4d4d4;font-weight:400;font-family:'Liberation Mono', monospace;font-style:normal;"><span style="color:#d4d4d4">    </span><span style="color:#9cdcfe">&quot;headers&quot;</span><span style="color:#d4d4d4">: {</span></div>
<div class="t" style="right:980.50px;top:766.39px;font-size:21.93px;line-height:21.93px;color:#858585;font-weight:400;font-family:'Liberation Mono', monospace;font-style:normal;">9</div>
<div class="t" style="left:1673.00px;top:766.39px;font-size:21.93px;line-height:21.93px;color:#d4d4d4;font-weight:400;font-family:'Liberation Mono', monospace;font-style:normal;"><span style="color:#d4d4d4">        </span><span style="color:#9cdcfe">&quot;Accept&quot;</span><span style="color:#d4d4d4">: </span><span style="color:#ce9178">&quot;*/*&quot;</span><span style="color:#d4d4d4">,</span></div>
<div class="t" style="right:980.50px;top:800.39px;font-size:21.93px;line-height:21.93px;color:#858585;font-weight:400;font-family:'Liberation Mono', monospace;font-style:normal;">10</div>
<div class="t" style="left:1673.00px;top:800.39px;font-size:21.93px;line-height:21.93px;color:#d4d4d4;font-weight:400;font-family:'Liberation Mono', monospace;font-style:normal;"><span style="color:#d4d4d4">        </span><span style="color:#9cdcfe">&quot;Content-Length&quot;</span><span style="color:#d4d4d4">: </span><span style="color:#ce9178">&quot;150&quot;</span><span style="color:#d4d4d4">,</span></div>
<div class="t" style="right:980.50px;top:834.39px;font-size:21.93px;line-height:21.93px;color:#858585;font-weight:400;font-family:'Liberation Mono', monospace;font-style:normal;">11</div>
<div class="t" style="left:1673.00px;top:834.39px;font-size:21.93px;line-height:21.93px;color:#d4d4d4;font-weight:400;font-family:'Liberation Mono', monospace;font-style:normal;"><span style="color:#d4d4d4">        </span><span style="color:#9cdcfe">&quot;Content-Type&quot;</span><span style="color:#d4d4d4">: </span><span style="color:#ce9178">&quot;application/json&quot;</span><span style="color:#d4d4d4">,</span></div>
<div class="t" style="right:980.50px;top:868.39px;font-size:21.93px;line-height:21.93px;color:#858585;font-weight:400;font-family:'Liberation Mono', monospace;font-style:normal;">12</div>
<div class="t" style="left:1673.00px;top:868.39px;font-size:21.93px;line-height:21.93px;color:#d4d4d4;font-weight:400;font-family:'Liberation Mono', monospace;font-style:normal;"><span style="color:#d4d4d4">        </span><span style="color:#9cdcfe">&quot;Host&quot;</span><span style="color:#d4d4d4">: </span><span style="color:#ce9178">&quot;httpbin.org&quot;</span><span style="color:#d4d4d4">,</span></div>
<div class="t" style="right:980.50px;top:902.39px;font-size:21.93px;line-height:21.93px;color:#858585;font-weight:400;font-family:'Liberation Mono', monospace;font-style:normal;">13</div>
<div class="t" style="left:1673.00px;top:902.39px;font-size:21.93px;line-height:21.93px;color:#d4d4d4;font-weight:400;font-family:'Liberation Mono', monospace;font-style:normal;"><span style="color:#d4d4d4">        </span><span style="color:#9cdcfe">&quot;User-Agent&quot;</span><span style="color:#d4d4d4">: </span><span style="color:#ce9178">&quot;Beak/20.0.2 (Mac OS; 10.15.7)&quot;</span><span style="color:#d4d4d4">,</span></div>
<div class="t" style="right:980.50px;top:936.39px;font-size:21.93px;line-height:21.93px;color:#858585;font-weight:400;font-family:'Liberation Mono', monospace;font-style:normal;">14</div>
<div class="t" style="left:1673.00px;top:936.39px;font-size:21.93px;line-height:21.93px;color:#d4d4d4;font-weight:400;font-family:'Liberation Mono', monospace;font-style:normal;"><span style="color:#d4d4d4">        </span><span style="color:#9cdcfe">&quot;X-Amzn-Trace-Id&quot;</span><span style="color:#d4d4d4">: </span><span style="color:#ce9178">&quot;Root=1-62fb7905-3ef7bd1e3862d5c01313f90f&quot;</span></div>
<div class="t" style="right:980.50px;top:970.39px;font-size:21.93px;line-height:21.93px;color:#858585;font-weight:400;font-family:'Liberation Mono', monospace;font-style:normal;">15</div>
<div class="t" style="left:1673.00px;top:970.39px;font-size:21.93px;line-height:21.93px;color:#d4d4d4;font-weight:400;font-family:'Liberation Mono', monospace;font-style:normal;"><span style="color:#d4d4d4">    </span><span style="color:#d4d4d4">},</span></div>
<div class="t" style="right:980.50px;top:1004.39px;font-size:21.93px;line-height:21.93px;color:#858585;font-weight:400;font-family:'Liberation Mono', monospace;font-style:normal;">16</div>
<div class="t" style="left:1673.00px;top:1004.39px;font-size:21.93px;line-height:21.93px;color:#d4d4d4;font-weight:400;font-family:'Liberation Mono', monospace;font-style:normal;"><span style="color:#d4d4d4">    </span><span style="color:#9cdcfe">&quot;json&quot;</span><span style="color:#d4d4d4">: {</span></div>
<div class="t" style="right:980.50px;top:1038.39px;font-size:21.93px;line-height:21.93px;color:#858585;font-weight:400;font-family:'Liberation Mono', monospace;font-style:normal;">17</div>
<div class="t" style="left:1673.00px;top:1038.39px;font-size:21.93px;line-height:21.93px;color:#d4d4d4;font-weight:400;font-family:'Liberation Mono', monospace;font-style:normal;"><span style="color:#d4d4d4">        </span><span style="color:#9cdcfe">&quot;albums&quot;</span><span style="color:#d4d4d4">: {</span></div>
<div class="t" style="right:980.50px;top:1072.39px;font-size:21.93px;line-height:21.93px;color:#858585;font-weight:400;font-family:'Liberation Mono', monospace;font-style:normal;">18</div>
<div class="t" style="left:1673.00px;top:1072.39px;font-size:21.93px;line-height:21.93px;color:#d4d4d4;font-weight:400;font-family:'Liberation Mono', monospace;font-style:normal;"><span style="color:#d4d4d4">            </span><span style="color:#9cdcfe">&quot;1989&quot;</span><span style="color:#d4d4d4">: {</span></div>
<div class="t" style="right:980.50px;top:1106.39px;font-size:21.93px;line-height:21.93px;color:#858585;font-weight:400;font-family:'Liberation Mono', monospace;font-style:normal;">19</div>
<div class="t" style="left:1673.00px;top:1106.39px;font-size:21.93px;line-height:21.93px;color:#d4d4d4;font-weight:400;font-family:'Liberation Mono', monospace;font-style:normal;"><span style="color:#d4d4d4">                </span><span style="color:#9cdcfe">&quot;artist&quot;</span><span style="color:#d4d4d4">: </span><span style="color:#ce9178">&quot;Taylor Swift&quot;</span><span style="color:#d4d4d4">,</span></div>
<div class="t" style="right:980.50px;top:1140.39px;font-size:21.93px;line-height:21.93px;color:#858585;font-weight:400;font-family:'Liberation Mono', monospace;font-style:normal;">20</div>
<div class="t" style="left:1673.00px;top:1140.39px;font-size:21.93px;line-height:21.93px;color:#d4d4d4;font-weight:400;font-family:'Liberation Mono', monospace;font-style:normal;"><span style="color:#d4d4d4">                </span><span style="color:#9cdcfe">&quot;name&quot;</span><span style="color:#d4d4d4">: </span><span style="color:#ce9178">&quot;1989&quot;</span></div>
<div class="t" style="right:980.50px;top:1174.39px;font-size:21.93px;line-height:21.93px;color:#858585;font-weight:400;font-family:'Liberation Mono', monospace;font-style:normal;">21</div>
<div class="t" style="left:1673.00px;top:1174.39px;font-size:21.93px;line-height:21.93px;color:#d4d4d4;font-weight:400;font-family:'Liberation Mono', monospace;font-style:normal;"><span style="color:#d4d4d4">            </span><span style="color:#d4d4d4">},</span></div>
<div class="t" style="right:980.50px;top:1208.39px;font-size:21.93px;line-height:21.93px;color:#858585;font-weight:400;font-family:'Liberation Mono', monospace;font-style:normal;">22</div>
<div class="t" style="left:1673.00px;top:1208.39px;font-size:21.93px;line-height:21.93px;color:#d4d4d4;font-weight:400;font-family:'Liberation Mono', monospace;font-style:normal;"><span style="color:#d4d4d4">            </span><span style="color:#9cdcfe">&quot;mellotron&quot;</span><span style="color:#d4d4d4">: {</span></div>
<div class="t" style="right:980.50px;top:1242.39px;font-size:21.93px;line-height:21.93px;color:#858585;font-weight:400;font-family:'Liberation Mono', monospace;font-style:normal;">23</div>
<div class="t" style="left:1673.00px;top:1242.39px;font-size:21.93px;line-height:21.93px;color:#d4d4d4;font-weight:400;font-family:'Liberation Mono', monospace;font-style:normal;"><span style="color:#d4d4d4">                </span><span style="color:#9cdcfe">&quot;&quot;</span><span style="color:#d4d4d4">: </span><span style="color:#ce9178">&quot;&quot;</span></div>
<div class="t" style="right:980.50px;top:1276.39px;font-size:21.93px;line-height:21.93px;color:#858585;font-weight:400;font-family:'Liberation Mono', monospace;font-style:normal;">24</div>
<div class="t" style="left:1673.00px;top:1276.39px;font-size:21.93px;line-height:21.93px;color:#d4d4d4;font-weight:400;font-family:'Liberation Mono', monospace;font-style:normal;"><span style="color:#d4d4d4">            </span><span style="color:#d4d4d4">}</span></div>
<div class="t" style="right:980.50px;top:1310.39px;font-size:21.93px;line-height:21.93px;color:#858585;font-weight:400;font-family:'Liberation Mono', monospace;font-style:normal;">25</div>
<div class="t" style="left:1673.00px;top:1310.39px;font-size:21.93px;line-height:21.93px;color:#d4d4d4;font-weight:400;font-family:'Liberation Mono', monospace;font-style:normal;"><span style="color:#d4d4d4">        </span><span style="color:#d4d4d4">},</span></div>
<div class="t" style="right:980.50px;top:1344.39px;font-size:21.93px;line-height:21.93px;color:#858585;font-weight:400;font-family:'Liberation Mono', monospace;font-style:normal;">26</div>
<div class="t" style="left:1673.00px;top:1344.39px;font-size:21.93px;line-height:21.93px;color:#d4d4d4;font-weight:400;font-family:'Liberation Mono', monospace;font-style:normal;"><span style="color:#d4d4d4">        </span><span style="color:#9cdcfe">&quot;artists&quot;</span><span style="color:#d4d4d4">: [</span></div>
<div class="t" style="right:980.50px;top:1378.39px;font-size:21.93px;line-height:21.93px;color:#858585;font-weight:400;font-family:'Liberation Mono', monospace;font-style:normal;">27</div>
<div class="t" style="left:1673.00px;top:1378.39px;font-size:21.93px;line-height:21.93px;color:#d4d4d4;font-weight:400;font-family:'Liberation Mono', monospace;font-style:normal;"><span style="color:#d4d4d4">            </span><span style="color:#ce9178">&quot;Worakls&quot;</span><span style="color:#d4d4d4">,</span></div>
<div class="t" style="right:980.50px;top:1412.39px;font-size:21.93px;line-height:21.93px;color:#858585;font-weight:400;font-family:'Liberation Mono', monospace;font-style:normal;">28</div>
<div class="t" style="left:1673.00px;top:1412.39px;font-size:21.93px;line-height:21.93px;color:#d4d4d4;font-weight:400;font-family:'Liberation Mono', monospace;font-style:normal;"><span style="color:#d4d4d4">            </span><span style="color:#ce9178">&quot;Taylor Swift&quot;</span><span style="color:#d4d4d4">,</span></div>
<div class="t" style="right:980.50px;top:1446.39px;font-size:21.93px;line-height:21.93px;color:#858585;font-weight:400;font-family:'Liberation Mono', monospace;font-style:normal;">29</div>
<div class="t" style="left:1673.00px;top:1446.39px;font-size:21.93px;line-height:21.93px;color:#d4d4d4;font-weight:400;font-family:'Liberation Mono', monospace;font-style:normal;"><span style="color:#d4d4d4">            </span><span style="color:#ce9178">&quot;Maceo Plex&quot;</span><span style="color:#d4d4d4">,</span></div>
<div class="t" style="right:980.50px;top:1480.39px;font-size:21.93px;line-height:21.93px;color:#858585;font-weight:400;font-family:'Liberation Mono', monospace;font-style:normal;">30</div>
<div class="t" style="left:1673.00px;top:1480.39px;font-size:21.93px;line-height:21.93px;color:#d4d4d4;font-weight:400;font-family:'Liberation Mono', monospace;font-style:normal;"><span style="color:#d4d4d4">            </span><span style="color:#ce9178">&quot;Township Rebellion&quot;</span></div>
<div class="t" style="right:980.50px;top:1514.39px;font-size:21.93px;line-height:21.93px;color:#858585;font-weight:400;font-family:'Liberation Mono', monospace;font-style:normal;">31</div>
<div class="t" style="left:1673.00px;top:1514.39px;font-size:21.93px;line-height:21.93px;color:#d4d4d4;font-weight:400;font-family:'Liberation Mono', monospace;font-style:normal;"><span style="color:#d4d4d4">        </span><span style="color:#d4d4d4">]</span></div>
<div class="t" style="right:980.50px;top:1548.39px;font-size:21.93px;line-height:21.93px;color:#858585;font-weight:400;font-family:'Liberation Mono', monospace;font-style:normal;">32</div>
<div class="t" style="left:1673.00px;top:1548.39px;font-size:21.93px;line-height:21.93px;color:#d4d4d4;font-weight:400;font-family:'Liberation Mono', monospace;font-style:normal;"><span style="color:#d4d4d4">    </span><span style="color:#d4d4d4">},</span></div>
<div class="t" style="right:980.50px;top:1582.39px;font-size:21.93px;line-height:21.93px;color:#858585;font-weight:400;font-family:'Liberation Mono', monospace;font-style:normal;">33</div>
<div class="t" style="left:1673.00px;top:1582.39px;font-size:21.93px;line-height:21.93px;color:#d4d4d4;font-weight:400;font-family:'Liberation Mono', monospace;font-style:normal;"><span style="color:#d4d4d4">    </span><span style="color:#9cdcfe">&quot;origin&quot;</span><span style="color:#d4d4d4">: </span><span style="color:#ce9178">&quot;213.44.224.93&quot;</span><span style="color:#d4d4d4">,</span></div>
<div class="r" style="left:1673.0px;top:519.7px;width:1.5px;height:1054.0px;background:#404040;"></div>
<div class="r" style="left:1725.6px;top:757.7px;width:1.5px;height:204.0px;background:#404040;"></div>
<div class="r" style="left:1725.6px;top:1029.7px;width:1.5px;height:510.0px;background:#404040;"></div>
<div class="r" style="left:1778.3px;top:1063.7px;width:1.5px;height:238.0px;background:#404040;"></div>
<div class="r" style="left:1778.3px;top:1369.7px;width:1.5px;height:136.0px;background:#404040;"></div>
<div class="r" style="left:1830.9px;top:1097.7px;width:1.5px;height:68.0px;background:#404040;"></div>
<div class="r" style="left:1830.9px;top:1233.7px;width:1.5px;height:34.0px;background:#404040;"></div>
</div></div>
<div class="r" style="left:504px;top:1227px;width:1046px;height:373px;background:#1f1f1f;"></div>
<div class="r" style="left:621.8px;top:1227px;width:928.2px;height:34px;background:transparent;box-sizing:border-box;border:4.2px solid #272727"></div>
<div class="r" style="left:1530.2px;top:1231px;width:1px;height:369px;background:#3a3a3a;"></div>
<div class="r" style="left:1531px;top:1227px;width:19px;height:3.8px;background:#878785;"></div>
<div class="r" style="left:504px;top:1227px;width:1027px;height:373px;overflow:hidden">
<div class="r" style="left:-504px;top:-1227px;width:2600px;height:1600px">
<div class="t" style="right:2030.50px;top:1236.19px;font-size:21.93px;line-height:21.93px;color:#858585;font-weight:400;font-family:'Liberation Mono', monospace;font-style:normal;">1</div>
<div class="t" style="left:623.00px;top:1236.19px;font-size:21.93px;line-height:21.93px;color:#d4d4d4;font-weight:400;font-family:'Liberation Mono', monospace;font-style:normal;"><span style="color:#6a9955">POST</span><span style="color:#d4d4d4"> </span><span style="color:#6cb6ec">/post?X-Test-Header=Foo-Bar</span><span style="color:#d4d4d4"> HTTP/1.1</span></div>
<div class="t" style="right:2030.50px;top:1270.19px;font-size:21.93px;line-height:21.93px;color:#858585;font-weight:400;font-family:'Liberation Mono', monospace;font-style:normal;">2</div>
<div class="t" style="left:623.00px;top:1270.19px;font-size:21.93px;line-height:21.93px;color:#d4d4d4;font-weight:400;font-family:'Liberation Mono', monospace;font-style:normal;"><span style="color:#6cb6ec">Host</span><span style="color:#d4d4d4">: httpbin.org</span></div>
<div class="t" style="right:2030.50px;top:1304.19px;font-size:21.93px;line-height:21.93px;color:#858585;font-weight:400;font-family:'Liberation Mono', monospace;font-style:normal;">3</div>
<div class="t" style="left:623.00px;top:1304.19px;font-size:21.93px;line-height:21.93px;color:#d4d4d4;font-weight:400;font-family:'Liberation Mono', monospace;font-style:normal;"><span style="color:#6cb6ec">Connection</span><span style="color:#d4d4d4">: close</span></div>
<div class="t" style="right:2030.50px;top:1338.19px;font-size:21.93px;line-height:21.93px;color:#858585;font-weight:400;font-family:'Liberation Mono', monospace;font-style:normal;">4</div>
<div class="t" style="left:623.00px;top:1338.19px;font-size:21.93px;line-height:21.93px;color:#d4d4d4;font-weight:400;font-family:'Liberation Mono', monospace;font-style:normal;"><span style="color:#6cb6ec">Accept</span><span style="color:#d4d4d4">: */*</span></div>
<div class="t" style="right:2030.50px;top:1372.19px;font-size:21.93px;line-height:21.93px;color:#858585;font-weight:400;font-family:'Liberation Mono', monospace;font-style:normal;">5</div>
<div class="t" style="left:623.00px;top:1372.19px;font-size:21.93px;line-height:21.93px;color:#d4d4d4;font-weight:400;font-family:'Liberation Mono', monospace;font-style:normal;"><span style="color:#6cb6ec">User-Agent</span><span style="color:#d4d4d4">: Beak/20.0.2 (Mac OS; 10.15.7)</span></div>
<div class="t" style="right:2030.50px;top:1406.19px;font-size:21.93px;line-height:21.93px;color:#858585;font-weight:400;font-family:'Liberation Mono', monospace;font-style:normal;">6</div>
<div class="t" style="left:623.00px;top:1406.19px;font-size:21.93px;line-height:21.93px;color:#d4d4d4;font-weight:400;font-family:'Liberation Mono', monospace;font-style:normal;"><span style="color:#6cb6ec">Content-Type</span><span style="color:#d4d4d4">: application/json</span></div>
<div class="t" style="right:2030.50px;top:1440.19px;font-size:21.93px;line-height:21.93px;color:#858585;font-weight:400;font-family:'Liberation Mono', monospace;font-style:normal;">7</div>
<div class="t" style="right:2030.50px;top:1474.19px;font-size:21.93px;line-height:21.93px;color:#858585;font-weight:400;font-family:'Liberation Mono', monospace;font-style:normal;">8</div>
<div class="t" style="left:623.00px;top:1474.19px;font-size:21.93px;line-height:21.93px;color:#d4d4d4;font-weight:400;font-family:'Liberation Mono', monospace;font-style:normal;"><span style="color:#d4d4d4">{</span></div>
<div class="t" style="right:2030.50px;top:1508.19px;font-size:21.93px;line-height:21.93px;color:#858585;font-weight:400;font-family:'Liberation Mono', monospace;font-style:normal;">9</div>
<div class="t" style="left:623.00px;top:1508.19px;font-size:21.93px;line-height:21.93px;color:#d4d4d4;font-weight:400;font-family:'Liberation Mono', monospace;font-style:normal;"><span style="color:#d4d4d4">    </span><span style="color:#9cdcfe">&quot;artists&quot;</span><span style="color:#d4d4d4">: [</span></div>
<div class="t" style="right:2030.50px;top:1542.19px;font-size:21.93px;line-height:21.93px;color:#858585;font-weight:400;font-family:'Liberation Mono', monospace;font-style:normal;">10</div>
<div class="t" style="left:623.00px;top:1542.19px;font-size:21.93px;line-height:21.93px;color:#d4d4d4;font-weight:400;font-family:'Liberation Mono', monospace;font-style:normal;"><span style="color:#d4d4d4">        </span><span style="color:#ce9178">&quot;Worakls&quot;</span><span style="color:#d4d4d4">,</span></div>
<div class="t" style="right:2030.50px;top:1576.19px;font-size:21.93px;line-height:21.93px;color:#858585;font-weight:400;font-family:'Liberation Mono', monospace;font-style:normal;">11</div>
<div class="t" style="left:623.00px;top:1576.19px;font-size:21.93px;line-height:21.93px;color:#d4d4d4;font-weight:400;font-family:'Liberation Mono', monospace;font-style:normal;"><span style="color:#d4d4d4">        </span><span style="color:#ce9178">&quot;Taylor Swift&quot;</span><span style="color:#d4d4d4">,</span></div>
<div class="t" style="right:2030.50px;top:1610.19px;font-size:21.93px;line-height:21.93px;color:#858585;font-weight:400;font-family:'Liberation Mono', monospace;font-style:normal;">12</div>
<div class="t" style="left:623.00px;top:1610.19px;font-size:21.93px;line-height:21.93px;color:#d4d4d4;font-weight:400;font-family:'Liberation Mono', monospace;font-style:normal;"><span style="color:#d4d4d4">        </span><span style="color:#ce9178">&quot;Maceo Plex&quot;</span><span style="color:#d4d4d4">,</span></div>
<div class="r" style="left:623.0px;top:1499.5px;width:1.5px;height:136.0px;background:#404040;"></div>
<div class="r" style="left:675.6px;top:1533.5px;width:1.5px;height:102.0px;background:#404040;"></div>
</div></div>
<div class="r" style="left:504px;top:1598px;width:2096px;height:2px;background:#161a2a;"></div>
<div class="r" style="left:850px;top:243px;width:900px;height:393px;background:transparent;border-radius:22px;box-shadow:0 12px 50px 6px rgba(0,0,0,0.40)"></div>
<div class="r" style="left:850px;top:243px;width:900px;height:393px;border-radius:22px;overflow:hidden;background:#181a26"><div class="r" style="left:640px;top:250px;width:320px;height:220px;background:#26262b;filter:blur(28px)"></div><div class="r" style="left:60px;top:330px;width:500px;height:80px;background:#22243a;filter:blur(30px);opacity:0.7"></div></div>
<div class="r" style="left:850px;top:243px;width:900px;height:393px;background:transparent;box-sizing:border-box;border:2px solid #46444f;border-radius:22px"></div>
<div class="t" style="left:870.80px;top:264.46px;font-size:38.2px;line-height:38.2px;color:#ffffff;font-weight:400;font-family:'Liberation Sans', sans-serif;font-style:normal;">ima</div>
<div class="r" style="left:935px;top:262.7px;width:2px;height:43.3px;background:#f0f0f0;"></div>
<div class="r" style="left:852px;top:323.5px;width:896px;height:2px;background:#3d3b47;"></div>
<div class="r" style="left:852px;top:342.6px;width:896px;height:45px;background:rgba(80,45,75,0.32);"></div>
<div class="r" style="left:852px;top:434.1px;width:896px;height:45.9px;background:rgba(80,45,75,0.32);"></div>
<div class="t" style="left:872.70px;top:354.21px;font-size:26.1px;line-height:26.1px;color:#ffffff;font-weight:400;font-family:'Liberation Sans', sans-serif;font-style:normal;">Image</div>
<div class="r" style="left:954.4px;top:365.9px;width:9.2px;height:3px;background:#f4f4f4;"></div>
<div class="t" style="left:972.70px;top:356.11px;font-size:23.85px;line-height:23.85px;color:#a9a8b1;font-weight:400;font-family:'Liberation Sans', sans-serif;font-style:normal;">https://httpbin.org/image</div>
<div class="t" style="left:872.70px;top:400.46px;font-size:25.8px;line-height:25.8px;color:#ffffff;font-weight:400;font-family:'Liberation Sans', sans-serif;font-style:normal;">Image (JPEG)</div>
<div class="r" style="left:1045.2px;top:411.9px;width:9.2px;height:3px;background:#f4f4f4;"></div>
<div class="t" style="left:1064.30px;top:402.11px;font-size:23.85px;line-height:23.85px;color:#a9a8b1;font-weight:400;font-family:'Liberation Sans', sans-serif;font-style:normal;">https://httpbin.org/image/jpeg</div>
<div class="t" style="left:872.70px;top:446.29px;font-size:26.0px;line-height:26.0px;color:#ffffff;font-weight:400;font-family:'Liberation Sans', sans-serif;font-style:normal;">Image (PNG)</div>
<div class="r" style="left:1035.0px;top:457.9px;width:9.2px;height:3px;background:#f4f4f4;"></div>
<div class="t" style="left:1054.00px;top:448.11px;font-size:23.85px;line-height:23.85px;color:#a9a8b1;font-weight:400;font-family:'Liberation Sans', sans-serif;font-style:normal;">https://httpbin.org/image/png</div>
<div class="t" style="left:872.70px;top:492.54px;font-size:25.7px;line-height:25.7px;color:#ffffff;font-weight:400;font-family:'Liberation Sans', sans-serif;font-style:normal;">Image (SVG)</div>
<div class="r" style="left:1032.1px;top:503.9px;width:9.2px;height:3px;background:#f4f4f4;"></div>
<div class="t" style="left:1051.50px;top:494.11px;font-size:23.85px;line-height:23.85px;color:#a9a8b1;font-weight:400;font-family:'Liberation Sans', sans-serif;font-style:normal;">https://httpbin.org/image/svg</div>
<div class="t" style="left:872.70px;top:538.12px;font-size:26.2px;line-height:26.2px;color:#ffffff;font-weight:400;font-family:'Liberation Sans', sans-serif;font-style:normal;">Image (WebP)</div>
<div class="r" style="left:1050.4px;top:549.9px;width:9.2px;height:3px;background:#f4f4f4;"></div>
<div class="t" style="left:1069.80px;top:540.11px;font-size:23.85px;line-height:23.85px;color:#a9a8b1;font-weight:400;font-family:'Liberation Sans', sans-serif;font-style:normal;">https://httpbin.org/image/webp</div>
<div class="t" style="left:872.70px;top:583.19px;font-size:27.3px;line-height:27.3px;color:#ffffff;font-weight:400;font-family:'Liberation Sans', sans-serif;font-style:normal;">Information</div>
<div class="r" style="left:1018.5px;top:595.9px;width:9.2px;height:3px;background:#f4f4f4;"></div>
<div class="t" style="left:1036.80px;top:586.11px;font-size:23.85px;line-height:23.85px;color:#a9a8b1;font-weight:400;font-family:'Liberation Sans', sans-serif;font-style:normal;">https://httpbin.org/status/101</div>
</div></body></html>
